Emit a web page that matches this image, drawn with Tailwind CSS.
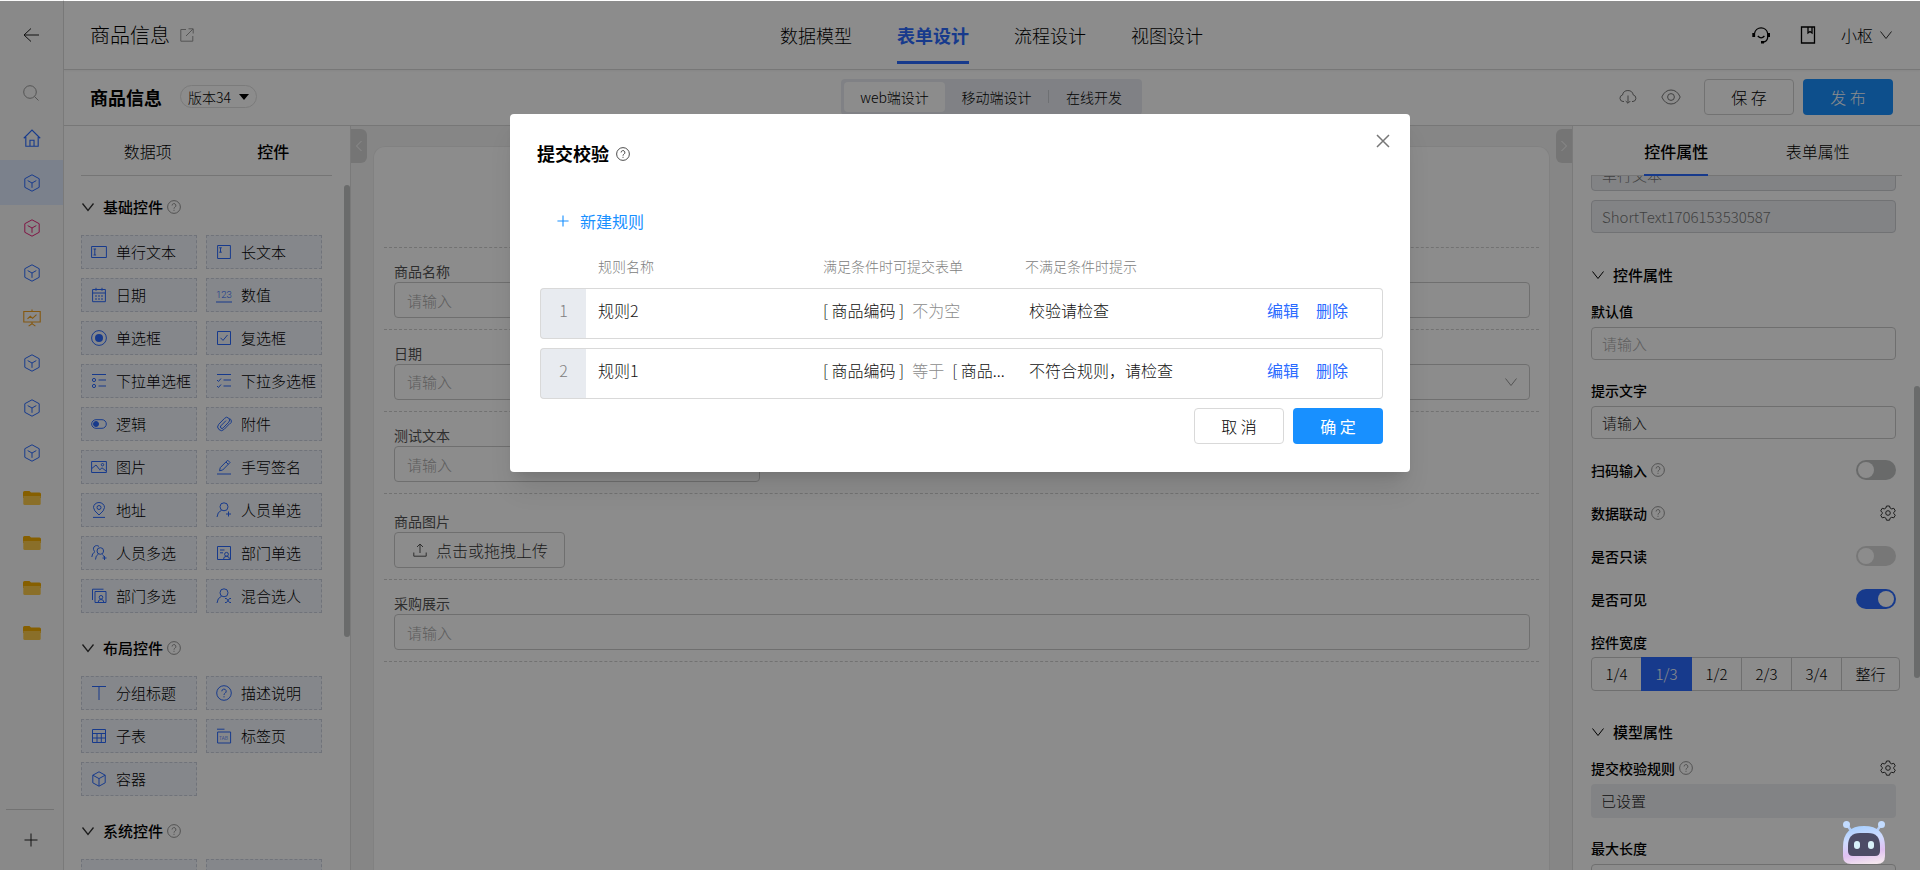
<!DOCTYPE html>
<html lang="zh-CN">
  <head>
    <meta charset="UTF-8" />
    <meta name="viewport" content="width=device-width, initial-scale=1.0" />
    <script src="https://cdn.jsdelivr.net/npm/@tailwindcss/browser@4"></script>
    <title>商品信息 - 表单设计</title>
  </head>
  <body class="relative flex h-screen overflow-hidden bg-white font-['Noto_Sans_CJK_SC',sans-serif] text-[15px] font-light text-black">
    <!-- Iconos -->
    <svg class="hidden">
      <defs>
        <symbol id="i-back" viewBox="0 0 16 16"><path d="M16 8H1M8 1.500L1 8l7 6.500" /></symbol>
        <symbol id="i-search" viewBox="0 0 16 16"><circle cx="7" cy="7" r="6.300" /><path d="M11.500 11.500l4 4" /></symbol>
        <symbol id="i-home" viewBox="0 0 16 16"><path d="M.7 8.200L8 1l7.300 7.200M2.500 7v8.300h11V7M6.200 15v-5h3.600v5" /></symbol>
        <symbol id="i-cube" viewBox="0 0 16 18"><path d="M8 .8l7.200 3.900v8.600L8 17.200.8 13.300V4.700zM3.700 6.600L8 9l4.300-2.400M8 9v4.800" /></symbol>
        <symbol id="i-board" viewBox="0 0 16 16"><path d="M.7 2.200h14.600v9.300H.7zM8 .5v1.700M4 8.800l2.500-2.300 2 1.800L12 5M8 11.500v1.500l-3 2.200M8 13l3 2.200" /></symbol>
        <symbol id="i-folder" viewBox="0 0 18 14"><path d="M0 1.500Q0 0 1.500 0h5l1.500 1.500h8.500q1.500 0 1.500 1.500v4H0z" fill="#f5ae00" stroke="none" /><path d="M.3 5h17.400v7.500q0 1.500-1.500 1.500H1.800Q.3 14 .3 12.500z" fill="#fbcb4b" stroke="none" /></symbol>
        <symbol id="i-plus" viewBox="0 0 14 14"><path d="M7 .5v13M.5 7h13" /></symbol>
        <symbol id="i-out" viewBox="0 0 14 14"><path d="M6 1.500H.8v11.700h12V8M8.500.8h4.700v4.700M13 1L6 8" /></symbol>
        <symbol id="i-down" viewBox="0 0 14 14"><path d="M1.500 3.500L7 10.500l5.500-7" /></symbol>
        <symbol id="i-left" viewBox="0 0 8 12"><path d="M6.500 1L1.500 6l5 5" /></symbol>
        <symbol id="i-right" viewBox="0 0 8 12"><path d="M1.500 1l5 5-5 5" /></symbol>
        <symbol id="i-help" viewBox="0 0 16 16"><circle cx="8" cy="8" r="7.300" /><path d="M5.800 6.300a2.200 2.200 0 1 1 3.300 1.900Q8 8.800 8 9.900M8 11.200v1.200" /></symbol>
        <symbol id="i-headset" viewBox="0 0 18 18"><path d="M2.500 11V7.500a6.700 6.700 0 0 1 13.200 0V11q0 4.500-5 5.300M5.800 10q3.400 3.800 6.600 0" /><path d="M1.500 7v4M16.800 7v4M9 16.300h3" stroke-width="2.400" /></symbol>
        <symbol id="i-book" viewBox="0 0 16 18"><path d="M1.500 1h13v16h-13zM8 1v6l2-1.500L12 7V1" /></symbol>
        <symbol id="i-cloud" viewBox="0 0 18 16"><path d="M5 12.500H4A3.300 3.300 0 0 1 3.500 6a5.500 5.500 0 0 1 10.800 0 3.300 3.300 0 0 1-.3 6.500h-1M9 6.500v7.500M6.700 12L9 14.300l2.300-2.300" /></symbol>
        <symbol id="i-eye" viewBox="0 0 20 16"><path d="M.8 8Q4 1 10 1t9.200 7Q16 15 10 15T.8 8z" /><circle cx="10" cy="8" r="3.400" /></symbol>
        <symbol id="i-close" viewBox="0 0 14 14"><path d="M1 1l12 12M13 1L1 13" /></symbol>
        <symbol id="i-gear" viewBox="0 0 16 16"><path d="M6.500 1h3l.6 2 1.600.9 2.100-.6 1.500 2.600L13.800 7.400v1.300l1.500 1.500-1.500 2.600-2.100-.5-1.600.9-.6 2h-3l-.6-2-1.600-.9-2.100.5L.7 10.200l1.500-1.500V7.400L.7 5.900l1.500-2.600 2.100.6 1.600-.9z" /><circle cx="8" cy="8" r="2.300" /></symbol>
        <symbol id="i-upload" viewBox="0 0 14 14"><path d="M.8 9.500v3.700h12.400V9.500M7 10V1.200M4 4l3-3 3 3" /></symbol>
        <symbol id="c-text" viewBox="0 0 16 16"><path d="M.6 2.500h14.800v11H.6zM2.500 5h2.600M2.500 11h2.600M3.800 5v6" /></symbol>
        <symbol id="c-long" viewBox="0 0 16 16"><path d="M1.600 1.500h12.800v13H1.600zM3.200 3.800h2.600M3.200 8.200h2.600M4.500 3.800v4.400" /></symbol>
        <symbol id="c-date" viewBox="0 0 16 16"><path d="M1.600 2.500h12.800v12.200H1.600zM1.600 6h12.800M5 .8v3M11 .8v3M4 9h2M7 9h2M10 9h2M4 12h2M7 12h2M10 12h2" /></symbol>
        <symbol id="c-num" viewBox="0 0 16 16"><path d="M0 15h16" /><text x="0" y="11" font-family="Roboto, sans-serif" font-size="9.500" fill="currentColor" stroke="none">123</text></symbol>
        <symbol id="c-radio" viewBox="0 0 16 16"><circle cx="8" cy="8" r="7.400" /><circle cx="8" cy="8" r="4" fill="currentColor" stroke="none" /></symbol>
        <symbol id="c-check" viewBox="0 0 16 16"><path d="M1.500 1.500h13v13h-13zM4.500 7.800l2.500 2.600L11.500 5" /></symbol>
        <symbol id="c-selone" viewBox="0 0 16 16"><path d="M1 1.500h14M7.500 7H15M7.500 13H15" /><circle cx="3" cy="7" r="1.600" /><circle cx="3" cy="13" r="1.600" /></symbol>
        <symbol id="c-selmany" viewBox="0 0 16 16"><path d="M1 1.500h14M7.500 7H15M7.500 13H15M1 7l1.500 1.500L5 5.500M1 13l1.500 1.500L5 11.500" /></symbol>
        <symbol id="c-switch" viewBox="0 0 16 16"><rect x=".7" y="3.700" width="14.600" height="8.600" rx="4.300" /><circle cx="5" cy="8" r="2.500" fill="currentColor" /></symbol>
        <symbol id="c-clip" viewBox="0 0 16 16"><path d="M13.800 7.500l-5.600 5.800a3.600 3.600 0 0 1-5.500-5L8.600 2.300a2.700 2.700 0 0 1 4.200 3.800l-5.600 5.800a1.500 1.500 0 0 1-2.400-2L10 4.600M14 7.800a3 3 0 0 0-.5-5.300" /></symbol>
        <symbol id="c-image" viewBox="0 0 16 16"><path d="M.6 2.500h14.800v11H.6zM.8 9.500L5 6l3.800 4.800 2.200-2 4 3.200" /><circle cx="11.500" cy="5.700" r="1.200" /></symbol>
        <symbol id="c-pen" viewBox="0 0 16 16"><path d="M1 15h14M3.500 11.800l.8-3.200 7.400-7.400 2.300 2.300-7.300 7.500zM10 3l2.300 2.300" /></symbol>
        <symbol id="c-pin" viewBox="0 0 16 16"><path d="M2 15.400h12M8 13Q2.500 8.500 2.500 5.500a5.500 5 0 0 1 11 0Q13.500 8.500 8 13z" /><circle cx="8" cy="5.500" r="2" /></symbol>
        <symbol id="c-user" viewBox="0 0 16 16"><circle cx="8" cy="4.800" r="4" /><path d="M1 15q.3-5 4.500-6.800M12.500 9.500v5M10 12h5" /></symbol>
        <symbol id="c-users" viewBox="0 0 16 16"><circle cx="9.300" cy="6" r="3.300" /><path d="M4.500 14.500q0-4 3-5.500M8 1.500a3.300 3.300 0 1 0-4 5.200M.8 12Q1 8.500 3.600 7M11.300 9.500q1.500 1 2 2.500M13.500 11v4M11.500 13h4" /></symbol>
        <symbol id="c-dept" viewBox="0 0 16 16"><path d="M1.500 1.500h13v13h-13zM4 5h4.500M4 7.800h3M7.500 14.300q0-3 3-3t3 3" /><circle cx="10.500" cy="9.300" r="1.900" /></symbol>
        <symbol id="c-depts" viewBox="0 0 16 16"><path d="M4 3.500h11v11H4zM1.500 12V1.200h11M7.200 14.200q0-2.700 2.800-2.700t2.800 2.700" /><circle cx="10" cy="9.300" r="1.800" /></symbol>
        <symbol id="c-mix" viewBox="0 0 16 16"><circle cx="8" cy="4.800" r="4" /><path d="M1 15q.3-5 4.500-6.800M9 10.500h1.500l3 4H15M9 14.500h1.500l3-4H15" /></symbol>
        <symbol id="c-title" viewBox="0 0 16 16"><path d="M1 1.500h14M8 1.500v13.500" /></symbol>
        <symbol id="c-grid" viewBox="0 0 16 16"><path d="M1.500 1.500h13v13h-13zM1.500 5.500h13M1.500 10h13M6 5.500v9M10.300 5.500v9" /></symbol>
        <symbol id="c-tab" viewBox="0 0 16 16"><path d="M1 1.200h7.500M1.600 4h13v11h-13z" /><text x="3" y="11.500" font-size="5" fill="currentColor" stroke="none">TAB</text></symbol>
        <symbol id="c-box" viewBox="0 0 16 16"><path d="M8 .8l6.200 3.400v7.600L8 15.200l-6.200-3.400V4.200zM1.800 4.200L8 7.600l6.200-3.400M8 7.600v7.600" /></symbol>
      </defs>
    </svg>

    <!-- Barra lateral -->
    <aside class="flex w-16 shrink-0 flex-col border-r border-[#dedede] bg-[#fafafa] pr-px">
      <button type="button" aria-label="返回" class="flex h-[70px] items-center justify-center"><svg class="size-4 fill-none stroke-[#222]"><use href="#i-back" /></svg></button>
      <button type="button" aria-label="搜索" class="flex h-[45px] items-center justify-center"><svg class="size-4 fill-none stroke-[#999]"><use href="#i-search" /></svg></button>
      <nav id="menu" class="-mr-px flex flex-col"></nav>
      <div class="mt-auto mr-2 ml-1.5 border-t border-[#cfcfcf]"></div>
      <button type="button" aria-label="新增" class="flex h-[60px] items-center justify-center"><svg class="size-3.5 fill-none stroke-[#222]"><use href="#i-plus" /></svg></button>
    </aside>

    <div class="flex min-w-0 flex-1 flex-col">
      <header class="z-10 grid h-[70px] shrink-0 grid-cols-[1fr_auto_1fr] items-center border-b border-[#d9d9d9] pr-[27px] pl-[26px] shadow-xs">
        <div class="flex items-center gap-2.5 text-xl"><span>商品信息</span><svg class="size-3.5 fill-none stroke-[#999]"><use href="#i-out" /></svg></div>
        <nav class="flex h-full gap-[45px] text-lg">
          <a href="#" class="flex items-center">数据模型</a>
          <a href="#" class="relative flex items-center font-bold text-[#2b6bff] after:absolute after:inset-x-0 after:bottom-[5px] after:h-[3px] after:bg-[#2b6bff]">表单设计</a>
          <a href="#" class="flex items-center">流程设计</a>
          <a href="#" class="flex items-center">视图设计</a>
        </nav>
        <div class="flex items-center justify-end text-base">
          <svg class="mr-[30px] size-[18px] fill-none stroke-black stroke-[1.300]"><use href="#i-headset" /></svg>
          <svg class="mr-[25px] h-[18px] w-4 fill-none stroke-black stroke-[1.300]"><use href="#i-book" /></svg>
          <button type="button" class="flex items-center gap-1.5">小枢<svg class="size-3.5 fill-none stroke-[#333]"><use href="#i-down" /></svg></button>
        </div>
      </header>

      <div class="grid h-14 shrink-0 grid-cols-[1fr_auto_1fr] items-center border-b border-[#d9d9d9] pr-[27px] pb-0.5 pl-[26px]">
        <div class="flex items-center gap-[18px]">
          <h1 class="text-lg font-bold">商品信息</h1>
          <button type="button" class="flex h-[23px] w-[77px] items-center justify-center gap-2 rounded-full border border-[#e0e0e0] text-sm">版本34<span class="border-x-[5px] border-t-[6px] border-x-transparent border-t-black"></span></button>
        </div>
        <div class="flex h-9 items-center rounded-sm bg-[#e9ecf2] p-[3px] text-sm">
          <button type="button" class="h-full w-[101px] rounded-sm bg-white">web端设计</button>
          <button type="button" class="w-[103px]">移动端设计</button>
          <span class="h-[13px] w-px bg-[#c9ccd2]"></span>
          <button type="button" class="w-[90px]">在线开发</button>
        </div>
        <div class="flex items-center justify-end">
          <svg class="mr-6 h-4 w-[18px] fill-none stroke-[#777]"><use href="#i-cloud" /></svg>
          <svg class="mr-[23px] h-4 w-5 fill-none stroke-[#777]"><use href="#i-eye" /></svg>
          <button type="button" class="mr-[9px] h-9 w-[90px] rounded-sm border border-[#d0d0d0] text-base">保 存</button>
          <button type="button" class="h-9 w-[90px] rounded-sm bg-[#1890ff] text-base text-white">发 布</button>
        </div>
      </div>

      <div class="flex min-h-0 flex-1">
        <!-- Paleta de controles -->
        <section class="relative w-[287px] shrink-0 border-r border-[#dedede] pr-[18px] pl-[17px]">
          <div class="grid h-[50px] grid-cols-2 items-center border-b border-[#d5d5d5] text-base">
            <button type="button" class="pl-2">数据项</button>
            <button type="button" class="pl-2 font-medium">控件</button>
          </div>
          <div id="palette" class="h-[calc(100%-50px)] overflow-hidden pt-[11px]"></div>
          <div class="absolute top-[59px] right-0 h-[452px] w-1.5 rounded-full bg-[#c1c4c4]"></div>
        </section>

        <!-- Lienzo -->
        <main class="relative min-w-0 flex-1 bg-[#f5f5f5] pt-5 pr-[22px] pl-[22px]">
          <button type="button" aria-label="收起左侧" class="absolute top-[3px] left-0 flex h-[34px] w-4 items-center justify-center rounded-r-md bg-[#d6d6d6]"><svg class="h-3 w-2 fill-none stroke-white"><use href="#i-left" /></svg></button>
          <button type="button" aria-label="收起右侧" class="absolute top-[3px] right-0 flex h-[34px] w-4 items-center justify-center rounded-l-md bg-[#d6d6d6]"><svg class="h-3 w-2 fill-none stroke-white"><use href="#i-right" /></svg></button>
          <form class="h-full rounded-t-xl border border-b-0 border-[#ececec] bg-white px-2.5 pt-[100px] text-[#333]">
            <div class="border-y border-dashed border-[#d0d0d0] pt-[13px] pr-[9px] pb-[11px] pl-2.5">
              <label for="nombre" class="mb-px block h-5 text-sm/5 font-normal text-[#555]">商品名称</label>
              <input id="nombre" type="text" placeholder="请输入" class="block h-9 w-full rounded-sm border border-[#cbcbcb] px-3 placeholder:text-[#aaa]" />
            </div>
            <div class="border-b border-dashed border-[#d0d0d0] pt-[13px] pr-[9px] pb-[11px] pl-2.5">
              <label for="fecha" class="mb-px block h-5 text-sm/5 font-normal text-[#555]">日期</label>
              <div class="relative">
                <select id="fecha" class="block h-9 w-full appearance-none rounded-sm border border-[#cbcbcb] px-3 text-[#aaa]"><option>请输入</option></select>
                <svg class="absolute top-[11px] right-3 size-3.5 fill-none stroke-[#999]"><use href="#i-down" /></svg>
              </div>
            </div>
            <div class="grid grid-cols-3 gap-x-[19px] border-b border-dashed border-[#d0d0d0] pt-[13px] pr-[9px] pb-[11px] pl-2.5">
              <div>
                <label for="prueba" class="mb-px block h-5 text-sm/5 font-normal text-[#555]">测试文本</label>
                <input id="prueba" type="text" placeholder="请输入" class="block h-9 w-full rounded-sm border border-[#cbcbcb] px-3 placeholder:text-[#aaa]" />
              </div>
            </div>
            <div class="border-b border-dashed border-[#d0d0d0] pt-[17px] pr-[9px] pb-[11px] pl-2.5">
              <label for="subir" class="mb-px block h-5 text-sm/5 font-normal text-[#555]">商品图片</label>
              <button id="subir" type="button" class="flex h-9 w-[171px] items-center gap-[9px] rounded border border-[#cbcbcb] pl-[18px] text-base"><svg class="size-3.5 fill-none stroke-[#555]"><use href="#i-upload" /></svg>点击或拖拽上传</button>
            </div>
            <div class="border-b border-dashed border-[#d0d0d0] pt-[13px] pr-[9px] pb-[11px] pl-2.5">
              <label for="compra" class="mb-px block h-5 text-sm/5 font-normal text-[#555]">采购展示</label>
              <input id="compra" type="text" placeholder="请输入" class="block h-9 w-full rounded-sm border border-[#cbcbcb] px-3 placeholder:text-[#aaa]" />
            </div>
          </form>
        </main>

        <!-- Propiedades -->
        <section class="relative flex w-[348px] shrink-0 flex-col border-l border-[#dedede] pr-[18px] pl-[18px]">
          <div class="grid h-[50px] shrink-0 grid-cols-2 border-b border-[#d5d5d5] pl-2.5 text-base">
            <button type="button" class="relative mx-auto font-medium after:absolute after:inset-x-0 after:-bottom-px after:h-0.5 after:bg-[#2b6bff]">控件属性</button>
            <button type="button" class="mx-auto pr-[18px]">表单属性</button>
          </div>
          <div class="min-h-0 overflow-hidden pr-1.5">
            <input type="text" aria-label="类型" value="单行文本" disabled class="-mt-[18px] block h-[33px] w-full rounded-sm border border-[#ced0d4] bg-[#edeff2] px-2.5 text-[#777]" />
            <input type="text" aria-label="编码" value="ShortText1706153530587" disabled class="mt-[9px] block h-[33px] w-full rounded-sm border border-[#ced0d4] bg-[#edeff2] px-2.5 text-[#777]" />

            <h2 class="mt-[30px] flex h-6 items-center gap-2 font-medium"><svg class="size-3.5 fill-none stroke-black"><use href="#i-down" /></svg>控件属性</h2>
            <label for="defecto" class="mt-3.5 block text-sm/5 font-medium">默认值</label>
            <input id="defecto" type="text" placeholder="请输入" class="mt-1.5 block h-[33px] w-full rounded-sm border border-[#cbcbcb] px-2.5 placeholder:text-[#aaa]" />
            <label for="ayuda" class="mt-5 block text-sm/5 font-medium">提示文字</label>
            <input id="ayuda" type="text" value="请输入" class="mt-1.5 block h-[33px] w-full rounded-sm border border-[#cbcbcb] px-2.5 text-[#222]" />

            <div class="mt-[21px] space-y-[23px] text-sm/5 font-medium">
              <div class="flex h-5 items-center">
                <label for="escaneo">扫码输入</label>
                <svg class="ml-1 size-3.5 fill-none stroke-[#888]"><use href="#i-help" /></svg>
                <input id="escaneo" type="checkbox" role="switch" class="ml-auto h-5 w-10 appearance-none rounded-full bg-[#bfc2c2] before:mt-0.5 before:ml-0.5 before:block before:size-4 before:rounded-full before:bg-white checked:bg-[#2b6bff] checked:before:ml-[22px]" />
              </div>
              <div class="flex h-5 items-center">
                <span>数据联动</span>
                <svg class="ml-1 size-3.5 fill-none stroke-[#888]"><use href="#i-help" /></svg>
                <button type="button" aria-label="设置数据联动" class="ml-auto"><svg class="size-4 fill-none stroke-[#333]"><use href="#i-gear" /></svg></button>
              </div>
              <div class="flex h-5 items-center">
                <label for="lectura">是否只读</label>
                <input id="lectura" type="checkbox" role="switch" class="ml-auto h-5 w-10 appearance-none rounded-full bg-[#d9d9d9] before:mt-0.5 before:ml-0.5 before:block before:size-4 before:rounded-full before:bg-white checked:bg-[#2b6bff] checked:before:ml-[22px]" />
              </div>
              <div class="flex h-5 items-center">
                <label for="visible">是否可见</label>
                <input id="visible" type="checkbox" role="switch" checked class="ml-auto h-5 w-10 appearance-none rounded-full bg-[#d9d9d9] before:mt-0.5 before:ml-0.5 before:block before:size-4 before:rounded-full before:bg-white checked:bg-[#2b6bff] checked:before:ml-[22px]" />
              </div>
              <div>控件宽度</div>
            </div>
            <div class="mt-[5px] -mr-1 flex h-[34px] rounded-sm border border-[#cbcbcb]">
              <button type="button" class="w-[49px]">1/4</button>
              <button type="button" class="-my-px w-[51px] bg-[#2b6bff] text-white">1/3</button>
              <button type="button" class="flex-1">1/2</button>
              <button type="button" class="flex-1 border-l border-[#cbcbcb]">2/3</button>
              <button type="button" class="flex-1 border-l border-[#cbcbcb]">3/4</button>
              <button type="button" class="w-[58px] border-l border-[#cbcbcb]">整行</button>
            </div>

            <h2 class="mt-[29px] flex h-6 items-center gap-2 font-medium"><svg class="size-3.5 fill-none stroke-black"><use href="#i-down" /></svg>模型属性</h2>
            <div class="mt-3.5 flex h-5 items-center text-sm/5 font-medium">
              <span>提交校验规则</span>
              <svg class="ml-1 size-3.5 fill-none stroke-[#888]"><use href="#i-help" /></svg>
              <button type="button" aria-label="设置校验规则" class="ml-auto"><svg class="size-4 fill-none stroke-[#333]"><use href="#i-gear" /></svg></button>
            </div>
            <div class="mt-1.5 flex h-[34px] items-center rounded-sm bg-[#edeff2] px-2.5 text-[#222]">已设置</div>
            <label for="largo" class="mt-5 block text-sm/5 font-medium">最大长度</label>
            <input id="largo" type="text" class="mt-1.5 block h-[33px] w-full rounded-sm border border-[#cbcbcb] px-2.5" />
          </div>
          <div class="absolute top-[260px] right-0 h-[292px] w-1.5 rounded-full bg-[#c1c4c4]"></div>
        </section>
      </div>
    </div>

    <!-- Modal -->
    <div class="absolute inset-x-0 top-px bottom-0 z-20 bg-black/45">
      <div role="dialog" aria-labelledby="modalTitulo" class="relative mx-auto mt-[113px] w-[900px] rounded bg-white px-[27px] pt-[26px] pb-7 shadow-xl">
        <button type="button" aria-label="关闭" class="absolute top-5 right-5"><svg class="size-3.5 fill-none stroke-[#777] stroke-[1.500]"><use href="#i-close" /></svg></button>
        <h2 id="modalTitulo" class="flex h-[27px] items-center gap-[7px] text-lg/[27px] font-bold">提交校验<svg class="size-3.5 fill-none stroke-[#333]"><use href="#i-help" /></svg></h2>
        <button type="button" class="mt-[42px] ml-5 flex h-6 items-center gap-[11px] text-base font-normal text-[#1890ff]"><svg class="size-3 fill-none stroke-[#1890ff] stroke-[1.300]"><use href="#i-plus" /></svg>新建规则</button>
        <div class="mt-[13px] pl-[3px]">
          <table class="w-full table-fixed border-separate border-spacing-x-0 border-spacing-y-[9px] text-left text-base text-[#111]">
            <thead>
              <tr class="h-6 text-sm/5 text-[#808080]">
                <th class="w-[46px] p-0"></th>
                <th class="w-[225px] p-0 pb-0.5 pl-3 font-light">规则名称</th>
                <th class="w-[202px] p-0 pb-0.5 pl-3 font-light">满足条件时可提交表单</th>
                <th class="w-[254px] p-0 pb-0.5 pl-3 font-light">不满足条件时提示</th>
                <th class="p-0"></th>
              </tr>
            </thead>
            <tbody>
              <tr class="h-[51px]">
                <td class="rounded-l border-y border-l border-[#d9d9d9] bg-[#e8ebf0] p-0 pb-2 text-center text-[#808080]">1</td>
                <td class="border-y border-[#d9d9d9] p-0 pb-2 pl-3">规则2</td>
                <td class="border-y border-[#d9d9d9] p-0 pb-2 pl-3 whitespace-nowrap">[ 商品编码 ]<span class="mx-2 text-[#8c8c8c]">不为空</span></td>
                <td class="border-y border-[#d9d9d9] p-0 pb-2 pl-4">校验请检查</td>
                <td class="rounded-r border-y border-r border-[#d9d9d9] p-0 pb-2 font-normal text-[#2b6bff]"><a href="#" class="mr-[17px]">编辑</a><a href="#">删除</a></td>
              </tr>
              <tr class="h-[51px]">
                <td class="rounded-l border-y border-l border-[#d9d9d9] bg-[#e8ebf0] p-0 pb-2 text-center text-[#808080]">2</td>
                <td class="border-y border-[#d9d9d9] p-0 pb-2 pl-3">规则1</td>
                <td class="border-y border-[#d9d9d9] p-0 pb-2 pl-3 whitespace-nowrap">[ 商品编码 ]<span class="mx-2 text-[#8c8c8c]">等于</span>[ 商品...</td>
                <td class="border-y border-[#d9d9d9] p-0 pb-2 pl-4">不符合规则，请检查</td>
                <td class="rounded-r border-y border-r border-[#d9d9d9] p-0 pb-2 font-normal text-[#2b6bff]"><a href="#" class="mr-[17px]">编辑</a><a href="#">删除</a></td>
              </tr>
            </tbody>
          </table>
        </div>
        <div class="flex justify-end gap-[9px] text-base">
          <button type="button" class="h-9 w-[90px] rounded-sm border border-[#d9d9d9]">取 消</button>
          <button type="button" class="h-9 w-[90px] rounded-sm bg-[#1890ff] font-normal text-white">确 定</button>
        </div>
      </div>
    </div>

    <!-- Asistente -->
    <button type="button" aria-label="智能助手" class="absolute right-[34px] bottom-1 z-30">
      <svg class="h-[46px] w-[44px]" viewBox="0 0 44 46">
        <linearGradient id="bot" x1=".4" y1="0" x2=".6" y2="1"><stop offset="0" stop-color="#a9d0ff" /><stop offset=".35" stop-color="#cfdcff" /><stop offset=".7" stop-color="#e0c0f2" /><stop offset="1" stop-color="#f3e6ee" /></linearGradient>
        <path d="M5 5l5 7M39 5l-5 7" stroke="#b5cdf5" stroke-width="2.500" />
        <circle cx="4.500" cy="4.500" r="3.500" fill="#c3dcff" /><circle cx="39.500" cy="4.500" r="3.500" fill="#c3dcff" />
        <path d="M1 27Q1 6 22 6t21 21v9q0 8-8 8H9q-8 0-8-8z" fill="url(#bot)" />
        <path d="M6 26q0-13 12-13h8q12 0 12 13v5q0 5-5 5H11q-5 0-5-5z" fill="#4c4c66" />
        <rect x="12" y="21" width="6" height="8" rx="3" fill="#d9f2fa" /><rect x="26" y="21" width="6" height="8" rx="3" fill="#d9f2fa" />
      </svg>
    </button>

    <script>
      const menu = [
        ["i-home", "text-[#2b6bff]"],
        ["i-cube", "text-[#2b6bff]", "bg-[#e1ebff]"],
        ["i-cube", "text-[#e8257c]"],
        ["i-cube", "text-[#2b6bff]"],
        ["i-board", "text-[#f0a020]"],
        ["i-cube", "text-[#2b6bff]"],
        ["i-cube", "text-[#2b6bff]"],
        ["i-cube", "text-[#2b6bff]"],
        ["i-folder", ""],
        ["i-folder", ""],
        ["i-folder", ""],
        ["i-folder", ""],
      ];

      document.getElementById("menu").innerHTML = menu
        .map(
          ([icon, color, active]) => `
          <a href="#" class="flex h-[45px] items-center justify-center ${active || ""}">
            <svg class="h-[18px] w-[18px] fill-none stroke-current ${color}"><use href="#${icon}" /></svg>
          </a>`
        )
        .join("");

      const groups = [
        {
          name: "基础控件",
          items: [
            ["c-text", "单行文本"],
            ["c-long", "长文本"],
            ["c-date", "日期"],
            ["c-num", "数值"],
            ["c-radio", "单选框"],
            ["c-check", "复选框"],
            ["c-selone", "下拉单选框"],
            ["c-selmany", "下拉多选框"],
            ["c-switch", "逻辑"],
            ["c-clip", "附件"],
            ["c-image", "图片"],
            ["c-pen", "手写签名"],
            ["c-pin", "地址"],
            ["c-user", "人员单选"],
            ["c-users", "人员多选"],
            ["c-dept", "部门单选"],
            ["c-depts", "部门多选"],
            ["c-mix", "混合选人"],
          ],
        },
        {
          name: "布局控件",
          items: [
            ["c-title", "分组标题"],
            ["i-help", "描述说明"],
            ["c-grid", "子表"],
            ["c-tab", "标签页"],
            ["c-box", "容器"],
          ],
        },
        {
          name: "系统控件",
          items: [
            ["", ""],
            ["", ""],
          ],
        },
      ];

      document.getElementById("palette").innerHTML = groups
        .map(
          (g) => `
          <div class="mb-[15px]">
            <h2 class="mb-2 flex h-10 items-center font-medium">
              <svg class="mr-2 size-3.5 fill-none stroke-[#333] stroke-[1.300]"><use href="#i-down" /></svg>${g.name}
              <svg class="ml-1 size-3.5 fill-none stroke-[#888]"><use href="#i-help" /></svg>
            </h2>
            <div class="grid grid-cols-2 gap-[9px] pr-[10px]">
              ${g.items
                .map(
                  ([icon, label]) => `
                <button type="button" class="flex h-[34px] items-center gap-[9px] border border-dashed border-[#ccd2de] bg-[#f3f6fd] pl-[9px] whitespace-nowrap">
                  <svg class="size-4 shrink-0 fill-none stroke-current text-[#2b6bff]"><use href="#${icon}" /></svg>${label}
                </button>`
                )
                .join("")}
            </div>
          </div>`
        )
        .join("");
    </script>
  </body>
</html>
